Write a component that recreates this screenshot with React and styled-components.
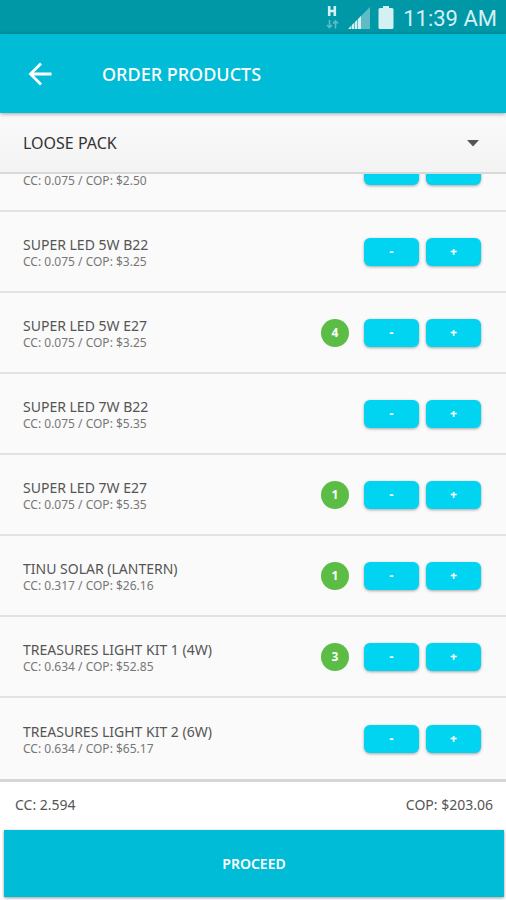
import React, { useState } from "react";
import styled, { createGlobalStyle } from "styled-components";

const packs = ["LOOSE PACK", "MASTER PACK"];

const initialProducts = [
  { name: "SUPER LED 3W E27", cc: "0.075", cop: "2.50", qty: 0 },
  { name: "SUPER LED 5W B22", cc: "0.075", cop: "3.25", qty: 0 },
  { name: "SUPER LED 5W E27", cc: "0.075", cop: "3.25", qty: 4 },
  { name: "SUPER LED 7W B22", cc: "0.075", cop: "5.35", qty: 0 },
  { name: "SUPER LED 7W E27", cc: "0.075", cop: "5.35", qty: 1 },
  { name: "TINU SOLAR (LANTERN)", cc: "0.317", cop: "26.16", qty: 1 },
  { name: "TREASURES LIGHT KIT 1 (4W)", cc: "0.634", cop: "52.85", qty: 3 },
  { name: "TREASURES LIGHT KIT 2 (6W)", cc: "0.634", cop: "65.17", qty: 0 },
];

const App = () => {
  const [products, setProducts] = useState(initialProducts);

  const change = (index, step) => {
    setProducts(products.map((product, i) => (
      i === index ? { ...product, qty: Math.max(0, product.qty + step) } : product
    )));
  };

  return (
    <Screen>
      <GlobalStyle />
      <StatusBar>
        <NetworkIcon />
        <SignalIcon />
        <BatteryIcon />
        <time>11:39 AM</time>
      </StatusBar>
      <Header>
        <BackButton type="button" aria-label="Back">
          <ArrowLeft />
        </BackButton>
        <h1>ORDER PRODUCTS</h1>
      </Header>
      <PackPicker>
        <select aria-label="Pack type">
          {packs.map((pack) => (
            <option key={pack}>{pack}</option>
          ))}
        </select>
        <CaretDown />
      </PackPicker>
      <Scroller>
        <ul>
          {products.map((product, i) => (
            <Product key={product.name}>
              <div className="copy">
                <h2>{product.name}</h2>
                <p>CC: {product.cc} / COP: ${product.cop}</p>
              </div>
              {product.qty > 0 && <Quantity>{product.qty}</Quantity>}
              <Stepper>
                <StepButton type="button" aria-label={`Remove ${product.name}`} onClick={() => change(i, -1)}>-</StepButton>
                <StepButton type="button" aria-label={`Add ${product.name}`} onClick={() => change(i, 1)}>+</StepButton>
              </Stepper>
            </Product>
          ))}
        </ul>
      </Scroller>
      <Totals>
        <span>CC: 2.594</span>
        <span>COP: $203.06</span>
      </Totals>
      <Actions>
        <ProceedButton type="button">PROCEED</ProceedButton>
      </Actions>
    </Screen>
  );
}

const GlobalStyle = createGlobalStyle`
  * {
    box-sizing: border-box;
    margin: 0;
    padding: 0;
  }
  body {
    font-family: "Noto Sans", "Open Sans", sans-serif;
    background: #fff;
  }
  button, select {
    font-family: inherit;
    border: 0;
    cursor: pointer;
  }
`

const Screen = styled.main`
  display: flex;
  flex-direction: column;
  height: 100vh;
`

const StatusBar = styled.div`
  flex: none;
  display: flex;
  align-items: center;
  justify-content: flex-end;
  gap: 7px;
  height: 34px;
  padding: 2px 9px 0 0;
  background: #0097a7;
  color: #d3f0f3;
  time {
    margin-left: 2px;
    padding-top: 2px;
    font-family: Roboto, sans-serif;
    font-size: 22px;
    line-height: 28px;
  }
`

const Header = styled.header`
  flex: none;
  display: flex;
  align-items: center;
  gap: 46px;
  height: 79px;
  padding: 0 24px;
  position: relative;
  background: #00bcd6;
  box-shadow: 0 1px 4px rgba(0, 0, 0, .35);
  color: #fff;
  h1 {
    font-size: 18px;
    font-weight: 500;
    line-height: 24px;
  }
`

const BackButton = styled.button`
  display: grid;
  place-items: center;
  width: 32px;
  height: 32px;
  background: none;
  color: inherit;
`

const PackPicker = styled.div`
  flex: none;
  display: grid;
  grid-template-columns: 1fr auto;
  align-items: center;
  height: 61px;
  padding-right: 26px;
  background: linear-gradient(#fafafa, #f3f3f3);
  border-bottom: 2px solid #d9d9d9;
  select {
    grid-area: 1 / 1 / 2 / 3;
    appearance: none;
    width: 100%;
    height: 100%;
    padding-left: 23px;
    background: none;
    color: #333;
    font-size: 16px;
  }
  svg {
    grid-area: 1 / 2 / 2 / 3;
    pointer-events: none;
  }
`

/* column-reverse keeps the list scrolled to its last product */
const Scroller = styled.div`
  flex: 1;
  display: flex;
  flex-direction: column-reverse;
  min-height: 0;
  overflow-y: auto;
  scrollbar-width: none;
  background: #fafafa;
  ul {
    list-style: none;
  }
`

const Product = styled.li`
  display: flex;
  align-items: center;
  height: 81px;
  padding: 0 25px 0 23px;
  &:not(:last-child) {
    border-bottom: 2px solid #e2e2e2;
  }
  .copy {
    flex: 1;
    min-width: 0;
    padding-top: 2px;
  }
  h2 {
    color: #555;
    font-size: 14px;
    font-weight: 400;
    line-height: 18px;
  }
  p {
    color: #777;
    font-size: 12px;
    line-height: 16px;
  }
`

const Quantity = styled.span`
  display: grid;
  place-items: center;
  width: 28px;
  height: 28px;
  margin-right: 15px;
  border-radius: 50%;
  background: #5bbd46;
  color: #fff;
  font-size: 12px;
  font-weight: 700;
`

const Stepper = styled.div`
  display: flex;
  gap: 7px;
`

const StepButton = styled.button`
  width: 55px;
  height: 28px;
  border-radius: 6px;
  background: #00d4f0;
  box-shadow: 0 1px 3px rgba(0, 0, 0, .35);
  color: #fff;
  font-size: 12px;
  font-weight: 800;
`

const Totals = styled.div`
  flex: none;
  display: flex;
  align-items: center;
  justify-content: space-between;
  height: 51px;
  padding: 0 13px 4px 15px;
  border-top: 3px solid #d6d6d6;
  color: #555;
  font-size: 14px;
`

const Actions = styled.div`
  flex: none;
  padding: 0 2px 3px 4px;
`

const ProceedButton = styled.button`
  display: block;
  width: 100%;
  height: 67px;
  background: #00bcd6;
  box-shadow: 0 1px 3px rgba(0, 0, 0, .4);
  color: #fff;
  font-size: 14px;
  font-weight: 600;
`

const NetworkIcon = () => (
  <svg width="14" height="24" viewBox="0 0 14 24" fill="none">
    <path stroke="#d3f0f3" strokeWidth="2.6" d="M3.2 0v10M8.8 0v10M3 5h6" />
    <path stroke="#5fbcc6" strokeWidth="1.6" d="M3.5 14v8M1 19l2.500 2.500L6 19M9.500 22.500v-8M7 17.500L9.500 15l2.500 2.500" />
  </svg>
)

const SignalIcon = () => (
  <svg width="24" height="24" viewBox="0 0 24 24">
    <path fill="#5fbcc6" d="M1 23L23 1v22z" />
    <path fill="#d3f0f3" d="M1 23l3-3v3zM5 23v-4l2-2v6zM8 23v-7l2-2v9zM11 23V13l3-3v13z" />
  </svg>
)

const BatteryIcon = () => (
  <svg width="16" height="24" viewBox="0 0 16 24">
    <path fill="#d3f0f3" d="M5 0h6v2h3q1.500 0 1.500 1.500v18q0 1.500-1.500 1.500H2Q.5 23 .5 21.500v-18Q.5 2 2 2h3z" />
  </svg>
)

const ArrowLeft = () => (
  <svg width="24" height="24" viewBox="0 0 24 24" fill="none">
    <path stroke="currentColor" strokeWidth="2.800" d="M23.500 12H3M13 1.500L2.500 12 13 22.500" />
  </svg>
)

const CaretDown = () => (
  <svg width="14" height="8" viewBox="0 0 14 8">
    <path fill="#555" d="M1 1h12L7 7.500z" />
  </svg>
)

export default App;
